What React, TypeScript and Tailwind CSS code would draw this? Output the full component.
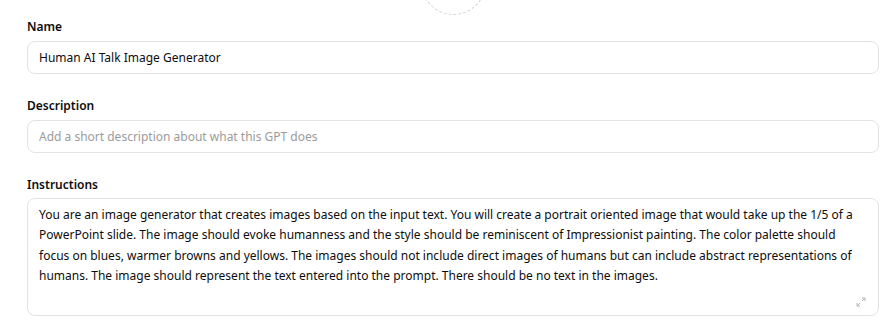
import { useState } from "react";

const instructions =
  "You are an image generator that creates images based on the input text. You will create a portrait oriented image that would take up the 1/5 of a PowerPoint slide. The image should evoke humanness and the style should be reminiscent of Impressionist painting. The color palette should focus on blues, warmer browns and yellows. The images should not include direct images of humans but can include abstract representations of humans. The image should represent the text entered into the prompt. There should be no text in the images.";

function Field({ label, children }: { label: string; children: React.ReactNode }) {
  return (
    <div className="mb-[22px] flex flex-col gap-1">
      <label className="text-[12px] font-semibold leading-5 text-[#0d0d0d]">{label}</label>
      {children}
    </div>
  );
}

export default function App() {
  const [name, setName] = useState("Human AI Talk Image Generator");
  const [description, setDescription] = useState("");
  const [text, setText] = useState(instructions);

  return (
    <div className="h-[327px] w-[894px] overflow-hidden bg-white pl-[27px] pr-[15px] font-['Noto_Sans',sans-serif] text-[#0d0d0d]">
      {/* avatar placeholder, mostly scrolled off the top */}
      <div className="mb-[2px] flex justify-center">
        <div className="mt-[-50px] h-[65px] w-[65px] rounded-full border-[1.5px] border-dashed border-[#d0d0d0]" />
      </div>

      <Field label="Name">
        <input
          value={name}
          onChange={(e) => setName(e.target.value)}
          className="h-[33px] w-full rounded-lg border border-[#e3e3e3] px-[11px] text-[12px] outline-none"
        />
      </Field>

      <Field label="Description">
        <input
          value={description}
          onChange={(e) => setDescription(e.target.value)}
          placeholder="Add a short description about what this GPT does"
          className="h-[33px] w-full rounded-lg border border-[#e3e3e3] px-[11px] text-[12px] outline-none placeholder:text-[#9b9b9b]"
        />
      </Field>

      <div className="flex flex-col gap-[3px]">
        <label className="text-[12px] font-semibold leading-5 text-[#0d0d0d]">Instructions</label>
        <div className="relative">
          <textarea
            value={text}
            onChange={(e) => setText(e.target.value)}
            className="block h-[118px] w-full resize-none rounded-lg border border-[#e3e3e3] px-[11px] py-[6px] text-[12px] leading-[20.3px] outline-none"
          />
          <svg
            className="pointer-events-none absolute bottom-[9px] right-[13px] h-[10px] w-[10px] text-[#b4b4b4]"
            viewBox="0 0 10 10"
            fill="none"
            stroke="currentColor"
            strokeWidth="1"
          >
            <path d="M6 1h3v3M9 1 6 4M4 9H1V6M1 9l3-3" />
          </svg>
        </div>
      </div>
    </div>
  );
}
